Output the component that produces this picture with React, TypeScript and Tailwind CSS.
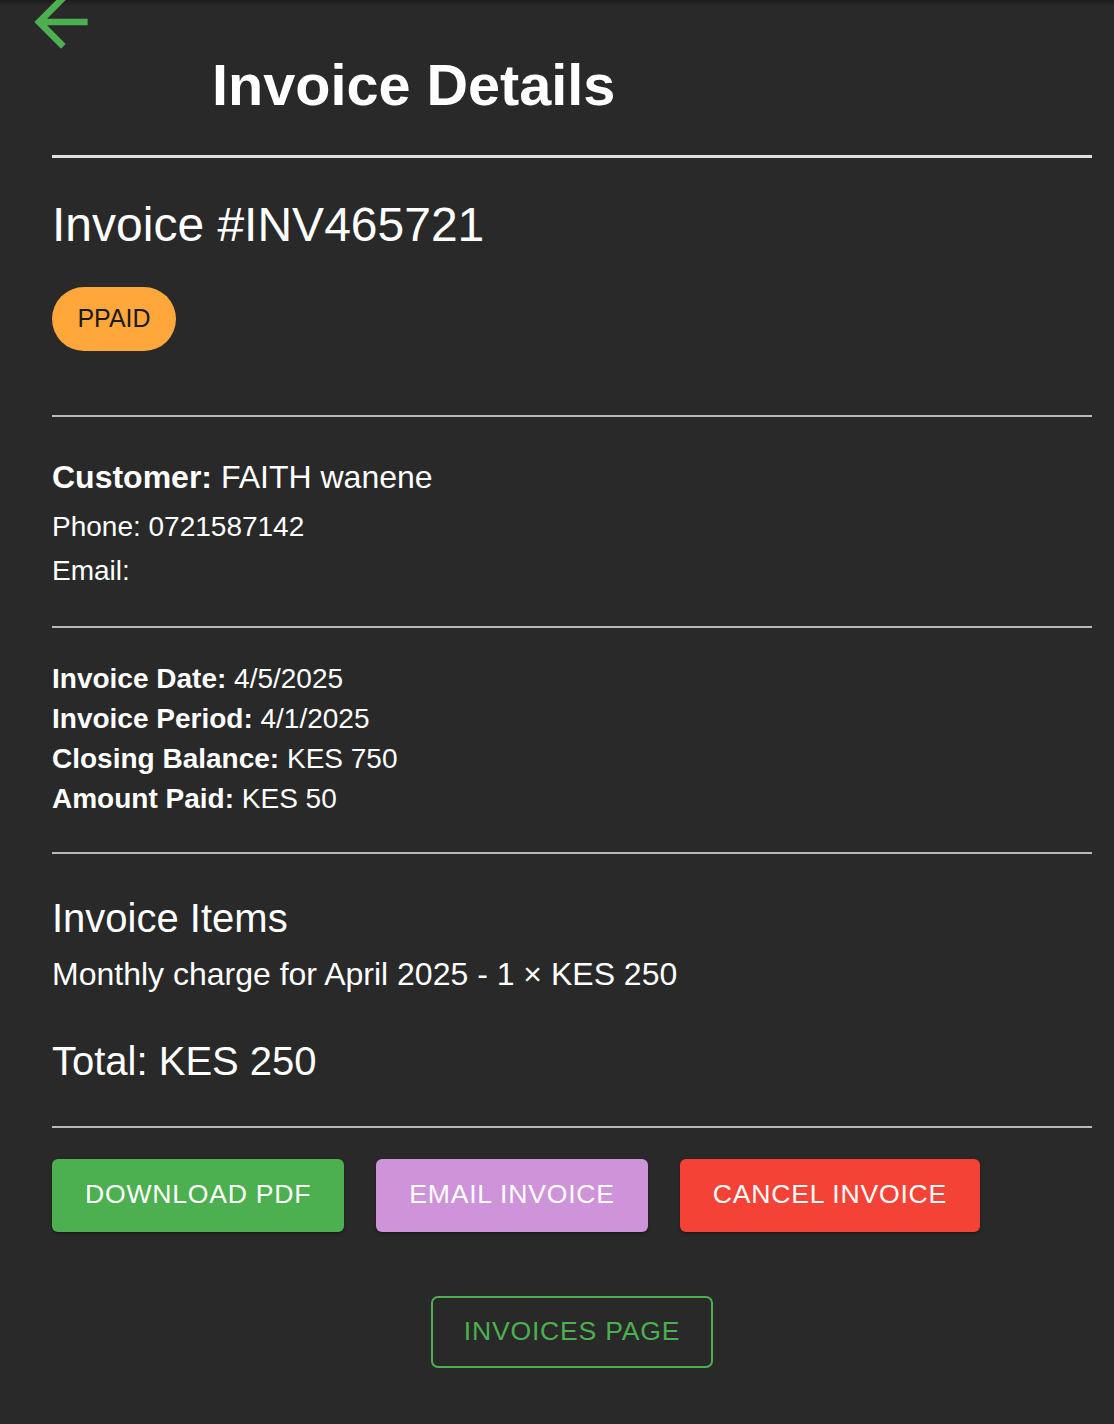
import React from "react";

function Divider() {
  return <div className="h-[2px] w-full bg-[#b8b8b8]" />;
}

function Row({ label, value }: { label: string; value: string }) {
  return (
    <div className="text-[28px] leading-[40px] text-white">
      <span className="font-bold">{label}</span> {value}
    </div>
  );
}

const btnShadow =
  "shadow-[0_3px_1px_-2px_rgba(0,0,0,0.2),0_2px_2px_0_rgba(0,0,0,0.14),0_1px_5px_0_rgba(0,0,0,0.12)]";

export default function App() {
  return (
    <div
      className="min-h-[1424px] w-full overflow-hidden bg-[#292929] text-white"
      style={{ fontFamily: '"Liberation Sans", Arial, sans-serif' }}
    >
      <div className="h-[6px] w-full bg-gradient-to-b from-[#1c1c1c] to-[#292929] -mb-[6px]" />
      <div className="pl-[52px] pr-[22px]">
        {/* Header */}
        <div className="flex items-start">
          <svg
            viewBox="0 0 24 24"
            className="-ml-[31px] -mt-[18px] h-[80px] w-[80px] shrink-0 fill-[#4caf50]"
          >
            <path d="M20 11H7.83l5.59-5.59L12 4l-8 8 8 8 1.41-1.41L7.83 13H20v-2z" />
          </svg>
          <h1 className="ml-[111px] mt-[51px] text-[57.6px] font-bold leading-[68px] text-white">
            Invoice Details
          </h1>
        </div>
        <div className="mt-[36px] h-[3px] w-full bg-[#e0e0e0]" />

        {/* Invoice number */}
        <h2 className="mt-[38px] text-[48px] font-normal leading-[57.6px]">
          Invoice #INV465721
        </h2>
        <div className="mt-[33px] flex h-[64px] w-[124px] items-center justify-center rounded-full bg-[#ffa73a] text-[25px] text-[#1a1a1a]">
          PPAID
        </div>

        <div className="mt-[64px]">
          <Divider />
        </div>

        {/* Customer */}
        <div className="mt-[36px] text-[32px] leading-[48px]">
          <span className="font-bold">Customer:</span> FAITH wanene
        </div>
        <div className="mt-[4px] text-[28px] leading-[44px]">Phone: 0721587142</div>
        <div className="text-[28px] leading-[44px]">Email: </div>

        <div className="mt-[33px]">
          <Divider />
        </div>

        {/* Details */}
        <div className="mt-[31px]">
          <Row label="Invoice Date:" value="4/5/2025" />
          <Row label="Invoice Period:" value="4/1/2025" />
          <Row label="Closing Balance:" value="KES 750" />
          <Row label="Amount Paid:" value="KES 50" />
        </div>

        <div className="mt-[33px]">
          <Divider />
        </div>

        {/* Items */}
        <h3 className="mt-[40px] text-[40px] font-normal leading-[48px]">Invoice Items</h3>
        <div className="mt-[10px] text-[32px] leading-[44px]">
          Monthly charge for April 2025 - 1 × KES 250
        </div>
        <div className="mt-[41px] text-[40px] leading-[48px]">Total: KES 250</div>

        <div className="mt-[41px]">
          <Divider />
        </div>

        {/* Actions */}
        <div className="mt-[31px] flex gap-[32px]">
          <button
            className={`flex h-[73px] items-center rounded-[6px] bg-[#4caf50] px-[33px] text-[26.6px] tracking-[0.02857em] text-white ${btnShadow}`}
          >
            DOWNLOAD PDF
          </button>
          <button
            className={`flex h-[73px] items-center rounded-[6px] bg-[#ce93d8] px-[33px] text-[26.6px] tracking-[0.02857em] text-white ${btnShadow}`}
          >
            EMAIL INVOICE
          </button>
          <button
            className={`flex h-[73px] items-center rounded-[6px] bg-[#f44336] px-[33px] text-[26.6px] tracking-[0.02857em] text-white ${btnShadow}`}
          >
            CANCEL INVOICE
          </button>
        </div>

        <div className="mt-[64px] flex justify-center">
          <button className="flex h-[72px] items-center rounded-[7px] border-2 border-[#4caf50] px-[31px] text-[26.6px] tracking-[0.02857em] text-[#4caf50]">
            INVOICES PAGE
          </button>
        </div>
      </div>
    </div>
  );
}
